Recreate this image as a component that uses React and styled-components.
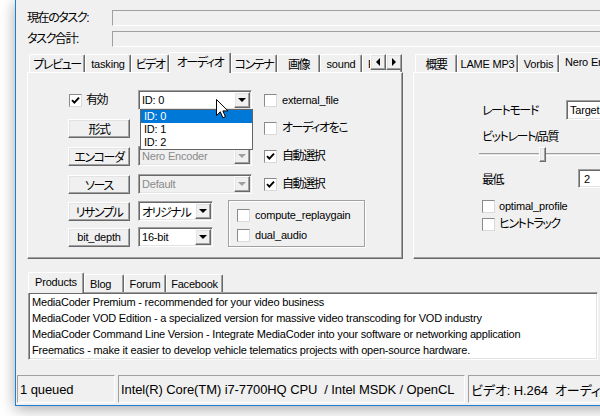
import React from "react";
import styled, { createGlobalStyle, css } from "styled-components";

const UI_FONT = `"Liberation Sans", "Noto Sans CJK JP", sans-serif`;

const GlobalStyle = createGlobalStyle`
  html, body { margin: 0; padding: 0; background: #ffffff; }
  body {
    font-family: ${UI_FONT};
    font-size: 12px;
    letter-spacing: -1.4px;
    color: #000;
    font-feature-settings: "palt";
  }
  *, *::before, *::after { box-sizing: border-box; }
`;

const latinText = css`
  font-size: 11px;
  letter-spacing: -0.2px;
`;

const sunken = css`
  border: 1px solid;
  border-color: #a0a0a0 #ffffff #ffffff #a0a0a0;
  box-shadow: inset 1px 1px #696969, inset -1px -1px #e3e3e3;
`;

const raised = css`
  border: 1px solid;
  border-color: #ffffff #696969 #696969 #ffffff;
  box-shadow: inset -1px -1px #a0a0a0, inset 1px 1px #e3e3e3;
`;

const Page = styled.div`
  width: 600px;
  height: 416px;
  overflow: hidden;
  padding-left: 15px;
  background: #ffffff;
`;

const Window = styled.div`
  width: 640px;
  height: 406px;
  background: #f0f0f0;
  border-left: 1px solid #1c7fd6;
  border-bottom: 1px solid #1c7fd6;
  box-shadow: 0 3px 14px rgba(0, 0, 0, 0.35);
  display: flex;
  flex-direction: column;
`;

/* ---------- top task fields ---------- */
const TaskFields = styled.div`
  display: flex;
  flex-direction: column;
  gap: 5px;
  padding: 10px 0 0 11px;
`;
const FieldRow = styled.div`
  display: flex;
  align-items: center;
  height: 16px;
`;
const FieldLabel = styled.span`
  width: 85px;
  flex: none;
  line-height: 16px;
`;
const ReadOnlyField = styled.div`
  flex: 1;
  height: 16px;
  border: 1px solid;
  border-color: #a0a0a0 #ffffff #ffffff #a0a0a0;
  background: #f0f0f0;
`;

/* ---------- tab controls ---------- */
const TabsRow = styled.div`
  display: flex;
  gap: 10px;
  height: 207px;
  margin-top: 5px;
  padding-left: 11px;
`;
const TabControl = styled.div`
  display: flex;
  flex-direction: column;
  width: ${(p) => (p.$w ? `${p.$w}px` : "auto")};
  flex: ${(p) => (p.$w ? "none" : "1")};
`;
const TabStrip = styled.div`
  position: relative;
  display: flex;
  align-items: flex-end;
  height: 20px;
  flex: none;
  padding-left: ${(p) => p.$pad ?? 2}px;
`;
const Tab = styled.div`
  position: relative;
  z-index: ${(p) => (p.$active ? 2 : 1)};
  flex: none;
  width: ${(p) => p.$w}px;
  height: ${(p) => (p.$active ? 21 : 18)}px;
  margin-bottom: ${(p) => (p.$active ? -1 : 0)}px;
  padding-bottom: ${(p) => (p.$active ? 3 : 0)}px;
  background: #f0f0f0;
  border-top: 1px solid #ffffff;
  border-left: 1px solid #ffffff;
  border-right: 1px solid #696969;
  box-shadow: inset -1px 0 #a0a0a0;
  border-radius: 2px 2px 0 0;
  display: flex;
  align-items: center;
  justify-content: ${(p) => (p.$left ? "flex-start" : "center")};
  padding-left: ${(p) => (p.$left ? 5 : 0)}px;
  white-space: nowrap;
  overflow: hidden;
  ${(p) => p.$latin && latinText};
`;
const ScrollArrows = styled.div`
  position: absolute;
  right: 1px;
  top: 2px;
  display: flex;
  z-index: 3;
`;
const ScrollButton = styled.div`
  width: 16px;
  height: 16px;
  background: #f0f0f0;
  ${raised};
  display: flex;
  align-items: center;
  justify-content: center;
`;
const TriLeft = styled.span`
  width: 0;
  height: 0;
  border-top: 4px solid transparent;
  border-bottom: 4px solid transparent;
  border-right: 4px solid #000;
`;
const TriRight = styled.span`
  width: 0;
  height: 0;
  border-top: 4px solid transparent;
  border-bottom: 4px solid transparent;
  border-left: 4px solid #000;
`;
const PanelBody = styled.div`
  flex: 1;
  background: #f0f0f0;
  border: 1px solid;
  border-color: #ffffff #696969 #696969 #ffffff;
  box-shadow: inset -1px -1px #a0a0a0;
`;
const AudioBody = styled(PanelBody)`
  padding: 13px 0 0 40px;
`;
const EncoderBody = styled(PanelBody)`
  padding: 27px 0 0 68px;
  display: flex;
  flex-direction: column;
`;

/* ---------- audio panel grid ---------- */
const TopGrid = styled.div`
  display: grid;
  grid-template-columns: 70px 126px 1fr;
  grid-auto-rows: 28px;
  align-items: center;
  justify-items: start;
`;
const BottomBlock = styled.div`
  display: flex;
  margin-top: 2px;
`;
const SubGrid = styled.div`
  display: grid;
  grid-template-columns: 70px 75px;
  grid-template-rows: 20px 20px;
  row-gap: 6px;
  padding-top: 1px;
  align-items: center;
  justify-items: start;
`;
const GroupBox = styled.div`
  margin-left: 15px;
  width: 137px;
  height: 47px;
  border: 1px solid #a0a0a0;
  box-shadow: 1px 1px #ffffff, inset 1px 1px #ffffff;
  padding: 7px 0 0 8px;
  display: flex;
  flex-direction: column;
  gap: 6px;
`;

const ClassicButton = styled.div`
  width: 62px;
  height: 19px;
  background: #f0f0f0;
  ${raised};
  display: flex;
  align-items: center;
  justify-content: center;
  white-space: nowrap;
  ${(p) => p.$latin && latinText};
`;

const CheckRow = styled.label`
  display: flex;
  align-items: center;
  gap: ${(p) => p.$gap ?? 5}px;
  height: 14px;
  margin-left: ${(p) => p.$ml ?? 0}px;
  margin-top: ${(p) => p.$mt ?? 0}px;
  white-space: nowrap;
`;
const CheckLabel = styled.span`
  ${(p) => p.$latin && latinText};
  line-height: 14px;
`;
const CheckBoxFrame = styled.span`
  flex: none;
  width: 13px;
  height: 13px;
  background: #ffffff;
  border: 1px solid;
  border-color: #8a8a8a #dadada #dadada #8a8a8a;
  display: flex;
  align-items: center;
  justify-content: center;
`;

const ComboBox = styled.div`
  position: relative;
  width: ${(p) => p.$w}px;
  height: 20px;
  background: ${(p) => (p.$disabled ? "#f0f0f0" : "#ffffff")};
  ${sunken};
  display: flex;
  align-items: center;
  flex: none;
`;
const ComboText = styled.span`
  flex: 1;
  padding-left: 3px;
  color: ${(p) => (p.$disabled ? "#8a8a8a" : "#000")};
  white-space: nowrap;
  overflow: hidden;
  ${(p) => p.$latin && latinText};
`;
const DropButton = styled.span`
  flex: none;
  width: 16px;
  height: 16px;
  margin-right: 1px;
  background: #f0f0f0;
  ${raised};
  display: flex;
  align-items: center;
  justify-content: center;
`;
const DropArrow = styled.span`
  width: 0;
  height: 0;
  border-left: 4px solid transparent;
  border-right: 4px solid transparent;
  border-top: 4px solid ${(p) => (p.$disabled ? "#a0a0a0" : "#000")};
`;
const DropList = styled.div`
  position: absolute;
  left: 1px;
  top: 100%;
  width: 113px;
  background: #ffffff;
  border: 1px solid #646464;
  z-index: 10;
`;
const DropItem = styled.div`
  height: 13px;
  line-height: 13px;
  padding-left: 3px;
  background: ${(p) => (p.$selected ? "#0078d7" : "transparent")};
  color: ${(p) => (p.$selected ? "#ffffff" : "#000")};
  ${latinText};
`;
const Cursor = styled.svg`
  position: absolute;
  left: 77px;
  top: 8px;
  z-index: 20;
`;

/* ---------- encoder panel ---------- */
const FormLine = styled.div`
  display: flex;
  align-items: center;
  height: 19px;
  margin-top: ${(p) => p.$mt ?? 0}px;
`;
const FormLabel = styled.span`
  width: ${(p) => p.$w}px;
  flex: none;
`;
const StackLabel = styled.div`
  margin-top: 11px;
  line-height: 14px;
  height: 14px;
`;
const Slider = styled.div`
  position: relative;
  margin: 3px 0 0 -3px;
  height: 15px;
`;
const SliderTrack = styled.div`
  position: relative;
  top: 6px;
  height: 3px;
  border-top: 1px solid #a0a0a0;
  border-bottom: 1px solid #ffffff;
  background: #e3e3e3;
`;
const SliderThumb = styled.div`
  position: absolute;
  left: 60px;
  top: 0;
  width: 7px;
  height: 15px;
  background: #f0f0f0;
  ${raised};
`;
const NumberField = styled.div`
  width: 60px;
  height: 19px;
  background: #ffffff;
  ${sunken};
  padding-left: 5px;
  display: flex;
  align-items: center;
  ${latinText};
`;

/* ---------- bottom tabs + list ---------- */
const NewsControl = styled.div`
  display: flex;
  flex-direction: column;
  width: 570px;
  margin: 13px 0 0 12px;
`;
const NewsList = styled.div`
  height: 68px;
  background: #ffffff;
  ${sunken};
  padding: 1px 3px;
  overflow: hidden;
`;
const NewsLine = styled.div`
  height: 16px;
  line-height: 16px;
  white-space: nowrap;
  ${latinText};
`;

/* ---------- status bar ---------- */
const StatusBar = styled.div`
  display: flex;
  gap: 3px;
  height: 28px;
  margin: 15px 0 0 1px;
`;
const StatusPane = styled.div`
  width: ${(p) => p.$w}px;
  flex: none;
  border: 1px solid;
  border-color: #a0a0a0 #ffffff #ffffff #a0a0a0;
  padding-left: 2px;
  display: flex;
  align-items: center;
  white-space: nowrap;
  overflow: hidden;
  font-size: 13px;
  letter-spacing: -0.1px;
`;

/* ---------- small parts ---------- */
const CheckMark = () => (
  <svg width="9" height="9" viewBox="0 0 9 9">
    <path d="M1 4.2 L3.4 6.6 L8 1.6" stroke="#000" strokeWidth="1.9" fill="none" />
  </svg>
);

const Check = ({ checked, label, latin, ml, mt, gap }) => (
  <CheckRow $ml={ml} $mt={mt} $gap={gap}>
    <CheckBoxFrame>{checked && <CheckMark />}</CheckBoxFrame>
    <CheckLabel $latin={latin}>{label}</CheckLabel>
  </CheckRow>
);

const Combo = ({ value, width, disabled, latin, children }) => (
  <ComboBox $w={width} $disabled={disabled}>
    <ComboText $disabled={disabled} $latin={latin}>
      {value}
    </ComboText>
    <DropButton>
      <DropArrow $disabled={disabled} />
    </DropButton>
    {children}
  </ComboBox>
);

const leftTabs = [
  { t: "プレビュー", w: 56 },
  { t: "tasking", w: 46, latin: true },
  { t: "ビデオ", w: 38 },
  { t: "オーディオ", w: 62, active: true },
  { t: "コンテナ", w: 46 },
  { t: "画像", w: 43 },
  { t: "sound", w: 42, latin: true },
  { t: "Effects", w: 40, latin: true, left: true },
];

const rightTabs = [
  { t: "概要", w: 42 },
  { t: "LAME MP3", w: 61, latin: true },
  { t: "Vorbis", w: 41, latin: true },
  { t: "Nero Encoder", w: 90, latin: true, active: true, left: true },
];

const newsTabs = [
  { t: "Products", w: 56, latin: true, active: true },
  { t: "Blog", w: 40, latin: true, left: true },
  { t: "Forum", w: 42, latin: true },
  { t: "Facebook", w: 57, latin: true },
];

const news = [
  "MediaCoder Premium - recommended for your video business",
  "MediaCoder VOD Edition - a specialized version for massive video transcoding for VOD industry",
  "MediaCoder Command Line Version - Integrate MediaCoder into your software or networking application",
  "Freematics - make it easier to develop vehicle telematics projects with open-source hardware.",
];

const renderTabs = (tabs) =>
  tabs.map((tb) => (
    <Tab key={tb.t} $w={tb.w} $active={tb.active} $latin={tb.latin} $left={tb.left}>
      {tb.t}
    </Tab>
  ));

export default function App() {
  return (
    <>
      <GlobalStyle />
      <Page>
        <Window>
          <TaskFields>
            <FieldRow>
              <FieldLabel>現在のタスク:</FieldLabel>
              <ReadOnlyField />
            </FieldRow>
            <FieldRow>
              <FieldLabel>タスク合計:</FieldLabel>
              <ReadOnlyField />
            </FieldRow>
          </TaskFields>

          <TabsRow>
            <TabControl $w={376}>
              <TabStrip>
                {renderTabs(leftTabs)}
                <ScrollArrows>
                  <ScrollButton>
                    <TriLeft />
                  </ScrollButton>
                  <ScrollButton>
                    <TriRight />
                  </ScrollButton>
                </ScrollArrows>
              </TabStrip>
              <AudioBody>
                <TopGrid>
                  <Check checked label="有効" ml={1} gap={4} />
                  <Combo value="ID: 0" width={114} latin>
                    <DropList>
                      <DropItem $selected>ID: 0</DropItem>
                      <DropItem>ID: 1</DropItem>
                      <DropItem>ID: 2</DropItem>
                    </DropList>
                    <Cursor width="13" height="20" viewBox="0 0 13 20">
                      <path
                        d="M0.5 0.5 V16.5 L4.3 12.8 L6.9 18.8 L9.4 17.7 L6.9 11.9 H12 Z"
                        fill="#ffffff"
                        stroke="#000"
                        strokeWidth="1"
                        strokeLinejoin="round"
                      />
                    </Cursor>
                  </Combo>
                  <Check label="external_file" latin />

                  <ClassicButton>形式</ClassicButton>
                  <span />
                  <Check label="オーディオをこ" />

                  <ClassicButton>エンコーダ</ClassicButton>
                  <Combo value="Nero Encoder" width={114} disabled latin />
                  <Check checked label="自動選択" />

                  <ClassicButton>ソース</ClassicButton>
                  <Combo value="Default" width={114} disabled latin />
                  <Check checked label="自動選択" />
                </TopGrid>
                <BottomBlock>
                  <SubGrid>
                    <ClassicButton>リサンプル</ClassicButton>
                    <Combo value="オリジナル" width={75} />
                    <ClassicButton $latin>bit_depth</ClassicButton>
                    <Combo value="16-bit" width={75} latin />
                  </SubGrid>
                  <GroupBox>
                    <Check label="compute_replaygain" latin />
                    <Check label="dual_audio" latin />
                  </GroupBox>
                </BottomBlock>
              </AudioBody>
            </TabControl>

            <TabControl>
              <TabStrip>{renderTabs(rightTabs)}</TabStrip>
              <EncoderBody>
                <FormLine>
                  <FormLabel $w={84}>レートモード</FormLabel>
                  <Combo value="Target Bitrate" width={130} latin />
                </FormLine>
                <StackLabel>ビットレート/品質</StackLabel>
                <Slider>
                  <SliderTrack />
                  <SliderThumb />
                </Slider>
                <FormLine $mt={7}>
                  <FormLabel $w={96}>最低</FormLabel>
                  <NumberField>2</NumberField>
                </FormLine>
                <Check label="optimal_profile" latin mt={11} gap={4} />
                <Check label="ヒントトラック" mt={4} gap={4} />
              </EncoderBody>
            </TabControl>
          </TabsRow>

          <NewsControl>
            <TabStrip $pad={0}>{renderTabs(newsTabs)}</TabStrip>
            <NewsList>
              {news.map((n) => (
                <NewsLine key={n}>{n}</NewsLine>
              ))}
            </NewsList>
          </NewsControl>

          <StatusBar>
            <StatusPane $w={98}>1 queued</StatusPane>
            <StatusPane $w={347}>Intel(R) Core(TM) i7-7700HQ CPU&nbsp; / Intel MSDK / OpenCL</StatusPane>
            <StatusPane $w={220}>ビデオ: H.264&nbsp; オーディオ: Nero AAC</StatusPane>
          </StatusBar>
        </Window>
      </Page>
    </>
  );
}
